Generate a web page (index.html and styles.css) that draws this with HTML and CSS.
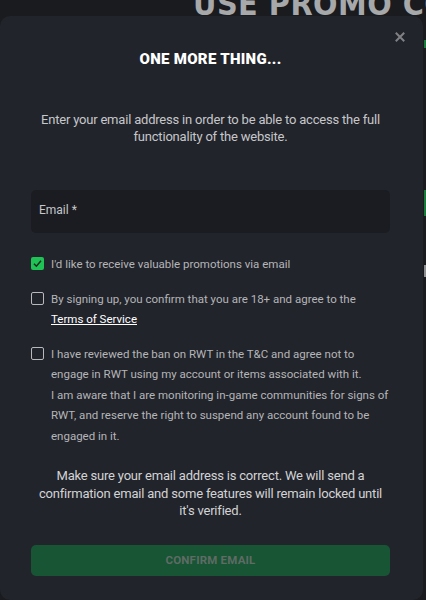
FILE: index.html
```html
<!DOCTYPE html>
<html lang="en">
<head>
<meta charset="utf-8">
<link rel="stylesheet" href="styles.css">
</head>
<body>
<div class="backdrop">
  <h1 class="promo">USE PROMO CODE</h1>
  <div class="side-green side-green-a"></div>
  <div class="side-green side-green-b"></div>
  <div class="side-gray"></div>
</div>
<div class="modal">
  <button class="close" aria-label="Close">
    <svg width="10" height="10" viewBox="0 0 10 10"><path d="M1.5 1.5L8.5 8.5M8.5 1.5L1.5 8.5" stroke="#7f8186" stroke-width="2" stroke-linecap="square"/></svg>
  </button>
  <h2 class="title">ONE MORE THING...</h2>
  <p class="desc">Enter your email address in order to be able to access the full functionality of the website.</p>
  <div class="field"><span class="label">Email *</span></div>
  <label class="check">
    <span class="box box-on">
      <svg width="13" height="13" viewBox="0 0 13 13"><path d="M3 6.8L5.4 9.2L10 3.8" fill="none" stroke="#1b2a20" stroke-width="1.5"/></svg>
    </span>
    <span class="check-text">I'd like to receive valuable promotions via email</span>
  </label>
  <label class="check">
    <span class="box"></span>
    <span class="check-text">By signing up, you confirm that you are 18+ and agree to the <a class="link">Terms of Service</a></span>
  </label>
  <label class="check">
    <span class="box"></span>
    <span class="check-text">I have reviewed the ban on RWT in the T&amp;C and agree not to engage in RWT using my account or items associated with it.<br>I am aware that I are monitoring in-game communities for signs of RWT, and reserve the right to suspend any account found to be engaged in it.</span>
  </label>
  <p class="note">Make sure your email address is correct. We will send a confirmation email and some features will remain locked until it's verified.</p>
  <button class="confirm">CONFIRM EMAIL</button>
</div>
</body>
</html>
```
FILE: styles.css
```css
html, body {
  margin: 0;
  padding: 0;
  height: 600px;
  overflow: hidden;
}
body {
  background: #1a1b1f;
  font-family: Roboto, "Noto Sans", sans-serif;
  position: relative;
}
.backdrop {
  height: 600px;
  overflow: hidden;
  position: relative;
}
.promo {
  margin: 0;
  position: absolute;
  left: 193px;
  top: -12px;
  font-family: "DejaVu Sans Condensed", "DejaVu Sans", sans-serif;
  font-weight: bold;
  font-size: 32px;
  line-height: 32px;
  letter-spacing: 0.5px;
  color: #a7a8aa;
  white-space: nowrap;
}
.side-green {
  position: absolute;
  left: 424px;
  width: 4px;
  background: #1a7a3c;
}
.side-green-a { top: 40px; height: 8px; }
.side-green-b { top: 190px; height: 26px; }
.side-gray {
  position: absolute;
  left: 424px;
  top: 265px;
  width: 4px;
  height: 12px;
  background: #8d8e90;
}
.modal {
  position: absolute;
  left: 0;
  top: 16px;
  width: 423px;
  height: 584px;
  box-sizing: border-box;
  background: #22242b;
  border-radius: 10px;
  padding: 33px 33px 0 31px;
  display: flex;
  flex-direction: column;
}
.close {
  position: absolute;
  right: 18px;
  top: 16px;
  width: 10px;
  height: 10px;
  padding: 0;
  border: 0;
  background: none;
  display: flex;
}
.title {
  margin: 0;
  text-align: center;
  font-size: 15px;
  line-height: 20px;
  font-weight: 900;
  color: #ffffff;
  letter-spacing: 0.3px;
}
.desc {
  margin: 42px -4px 0;
  text-align: center;
  font-size: 13px;
  line-height: 17px;
  letter-spacing: -0.2px;
  color: #c6c7ca;
}
.field {
  margin-top: 45px;
  height: 43px;
  box-sizing: border-box;
  background: #1b1c21;
  border-radius: 5px;
  display: flex;
  align-items: center;
  padding: 0 8px 3px;
}
.label {
  font-size: 12px;
  color: #c6c7ca;
}
.check {
  display: flex;
  gap: 7px;
  align-items: flex-start;
  margin-top: 14px;
}
.check:first-of-type {
  margin-top: 21px;
}
.box {
  flex: none;
  width: 13px;
  height: 13px;
  box-sizing: border-box;
  border: 1.5px solid #b8b9bc;
  border-radius: 2px;
  margin-top: 3px;
  display: flex;
}
.box-on {
  border: 0;
  background: #1fc255;
}
.check-text {
  font-size: 11.5px;
  line-height: 20.5px;
  color: #b4b5b8;
}
.link {
  color: #ffffff;
  text-decoration: underline;
}
.note {
  margin: 21px 0 0;
  text-align: center;
  font-size: 13px;
  line-height: 17.5px;
  letter-spacing: -0.2px;
  color: #d2d3d5;
}
.confirm {
  margin-top: 25px;
  height: 31px;
  border: 0;
  border-radius: 5px;
  background: #175534;
  color: #5f6b64;
  font-family: Roboto, sans-serif;
  font-weight: bold;
  font-size: 11.5px;
  letter-spacing: 0.2px;
}
```
